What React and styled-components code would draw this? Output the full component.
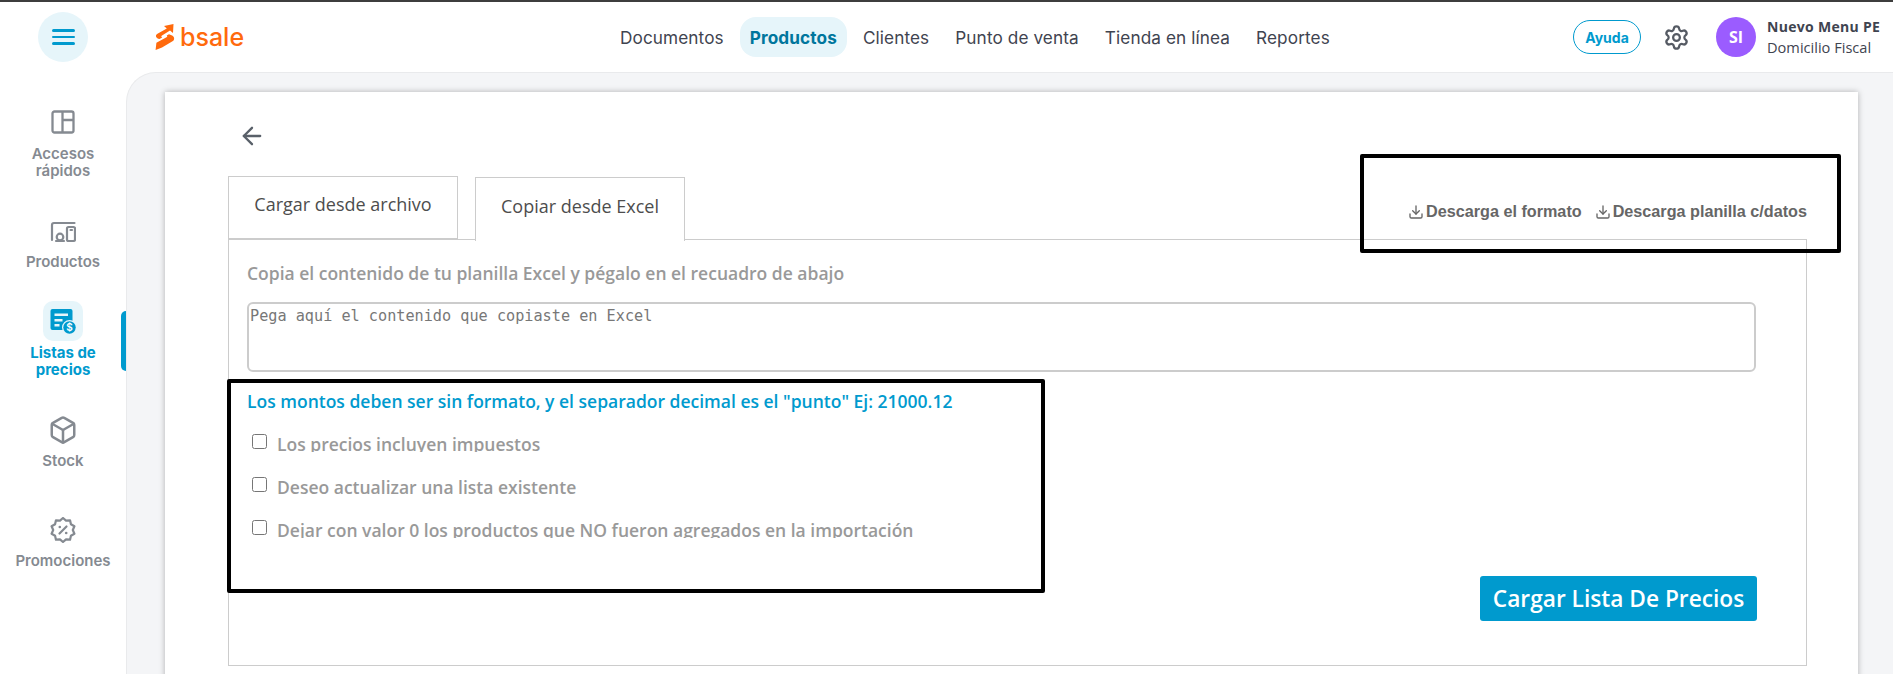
import React from 'react'
import styled, { createGlobalStyle } from 'styled-components'
import { Box, Settings, ArrowLeft, Download } from 'lucide-react'

const BLUE = '#009ace'
const GREY = '#858a91'

const Global = createGlobalStyle`
  html, body { margin: 0; padding: 0; background: #fff; }
  body { font-family: Inter, "Liberation Sans", sans-serif; }
`

const Page = styled.div`
  position: relative;
  width: 1893px;
  height: 674px;
  overflow: hidden;
  display: flex;
  flex-direction: column;
  background: #fff;
  border-top: 2px solid #3d3d3d;
  box-sizing: border-box;
`

const Header = styled.header`
  height: 70px;
  flex: none;
  position: relative;
  display: flex;
  align-items: center;
`

const MenuButton = styled.button`
  width: 50px;
  height: 50px;
  margin-left: 38px;
  border: 0;
  padding: 0;
  border-radius: 50%;
  background: #e6f5fa;
  display: flex;
  flex-direction: column;
  align-items: center;
  justify-content: center;
  gap: 4px;
  span {
    display: block;
    width: 23px;
    height: 2.4px;
    border-radius: 2px;
    background: ${BLUE};
  }
`

const Logo = styled.div`
  margin-left: 67px;
  display: flex;
  align-items: center;
  gap: 5px;
  color: #ff6a0d;
  font-size: 25px;
  font-weight: 500;
  line-height: 26px;
`

const Nav = styled.nav`
  position: absolute;
  left: 610px;
  top: 15px;
  display: flex;
  align-items: center;
  gap: 6px;
`

const NavLink = styled.a`
  height: 40px;
  padding: 0 10px;
  display: flex;
  align-items: center;
  border-radius: 16px;
  font-size: 17.2px;
  letter-spacing: 0.1px;
  color: ${p => (p.$active ? '#00769d' : '#3f4450')};
  font-weight: ${p => (p.$active ? 700 : 400)};
  background: ${p => (p.$active ? '#e6f5fa' : 'transparent')};
`

const HeaderRight = styled.div`
  margin-left: auto;
  display: flex;
  align-items: center;
`

const Help = styled.button`
  width: 68px;
  height: 34px;
  padding: 0;
  box-sizing: border-box;
  border: 1px solid ${BLUE};
  border-radius: 17px;
  background: #fff;
  color: ${BLUE};
  font-family: Inter, sans-serif;
  font-size: 14px;
  font-weight: 700;
`

const Gear = styled(Settings)`
  margin: 0 26px 0 22px;
  color: #555a63;
`

const Avatar = styled.div`
  width: 40px;
  height: 40px;
  border-radius: 50%;
  background: #9b5cff;
  color: #fff;
  display: flex;
  align-items: center;
  justify-content: center;
  font-family: "Open Sans", sans-serif;
  font-size: 16px;
  font-weight: 700;
`

const Account = styled.div`
  width: 126px;
  margin-left: 11px;
  font-family: "Open Sans", sans-serif;
  font-size: 14.6px;
  line-height: 20px;
  color: #3f4450;
  white-space: nowrap;
  b {
    display: block;
    font-size: 14px;
    letter-spacing: 0.3px;
  }
`

const Body = styled.div`
  flex: 1;
  min-height: 0;
  display: flex;
`

const Sidebar = styled.aside`
  width: 126px;
  flex: none;
  padding-top: 30px;
  display: flex;
  flex-direction: column;
  gap: 31px;
  box-sizing: border-box;
`

const SideItem = styled.div`
  position: relative;
  display: flex;
  flex-direction: column;
  align-items: center;
  gap: ${p => (p.$tall ? 3 : 2)}px;
  margin-top: ${p => p.$top || 0}px;
  margin-bottom: ${p => (p.$tall ? 1 : 0)}px;
  font-size: 15px;
  line-height: 17px;
  font-weight: ${p => (p.$active ? 700 : 600)};
  text-align: center;
  color: ${p => (p.$active ? BLUE : GREY)};
`

const SideIcon = styled.div`
  width: 40px;
  height: 40px;
  display: flex;
  align-items: center;
  justify-content: center;
  border-radius: 10px;
  background: ${p => (p.$active ? '#e6f5fa' : 'transparent')};
`

const Marker = styled.div`
  position: absolute;
  right: 0;
  top: 10px;
  width: 5px;
  height: 60px;
  border-radius: 5px 0 0 5px;
  background: ${BLUE};
`

const Main = styled.main`
  flex: 1;
  min-width: 0;
  padding: 19px 35px 0 38px;
  background: #f4f5f7;
  border-top: 1px solid #e9eaec;
  border-left: 1px solid #e9eaec;
  border-top-left-radius: 30px;
  box-sizing: border-box;
  display: flex;
`

const Card = styled.section`
  flex: 1;
  height: 620px;
  padding: 30px 51px 0 63px;
  background: #fff;
  box-shadow: 0 0 6px rgba(0, 0, 0, 0.28);
  box-sizing: border-box;
  font-family: "Open Sans", sans-serif;
`

const Back = styled(ArrowLeft)`
  display: block;
  margin: 0 0 26px 10px;
  color: #596069;
`

const TabRow = styled.div`
  height: 63px;
  display: flex;
  align-items: flex-start;
  gap: 17px;
`

const Tab = styled.div`
  position: relative;
  z-index: 1;
  box-sizing: border-box;
  width: ${p => p.$width}px;
  height: ${p => (p.$active ? 64 : 63)}px;
  margin-top: ${p => (p.$active ? 1 : 0)}px;
  display: flex;
  align-items: center;
  justify-content: center;
  padding-bottom: 8px;
  background: #fff;
  border: 1px solid #ccc;
  border-bottom: ${p => (p.$active ? '0' : '1px solid #ccc')};
  font-size: 18px;
  color: #4d4d4d;
`

const Downloads = styled.div`
  margin-left: auto;
  height: 71px;
  display: flex;
  align-items: center;
  gap: 13px;
`

const DownloadLink = styled.a`
  display: flex;
  align-items: center;
  gap: 2px;
  font-family: "Liberation Sans", sans-serif;
  font-size: 16.2px;
  font-weight: 700;
  color: #666;
  svg { width: 16px; height: 16px; }
`

const TabPanel = styled.div`
  height: 427px;
  padding: 22px 50px 0 18px;
  border: 1px solid #ccc;
  box-sizing: border-box;
  display: flex;
  flex-direction: column;
`

const Hint = styled.p`
  margin: 0 0 18px;
  font-size: 17.5px;
  line-height: 22px;
  font-weight: 600;
  color: #999;
`

const Paste = styled.textarea`
  display: block;
  width: 100%;
  height: 70px;
  flex: none;
  padding: 3px 1px 1px;
  margin-bottom: 18px;
  box-sizing: border-box;
  border: 2px solid #ccc;
  border-radius: 6px;
  outline: 0;
  resize: none;
  font-family: "DejaVu Sans Mono", monospace;
  font-size: 15.2px;
  line-height: 18px;
  &::placeholder { color: #777; opacity: 1; }
`

const Note = styled.p`
  margin: 0 0 19px;
  font-size: 17.5px;
  line-height: 23px;
  font-weight: 600;
  color: ${BLUE};
`

const Options = styled.div`
  display: flex;
  flex-direction: column;
  gap: 23px;
`

const Option = styled.label`
  display: flex;
  align-items: flex-start;
  height: 20px;
  overflow: hidden;
  font-size: 17.5px;
  line-height: 24px;
  font-weight: 600;
  color: #999;
  input {
    width: 15px;
    height: 15px;
    margin: 2px 10px 0 5px;
  }
`

const Submit = styled.button`
  align-self: flex-end;
  margin: 38px -1px 0 0;
  width: 277px;
  height: 45px;
  padding: 0;
  border: 0;
  border-radius: 3px;
  background: ${BLUE};
  color: #fff;
  font-family: "Open Sans", sans-serif;
  font-size: 22.7px;
  font-weight: 600;
`

const Callout = styled.div`
  position: absolute;
  z-index: 5;
  left: ${p => p.$x}px;
  top: ${p => p.$y}px;
  width: ${p => p.$w}px;
  height: ${p => p.$h}px;
  box-sizing: border-box;
  border: 4px solid #000;
  border-radius: 2px;
  pointer-events: none;
`

// logo mark, an S made of two bars with an arrow tip
const BoltMark = () => (
  <svg width="20" height="26" viewBox="0 0 20 26" fill="#ff6a0d">
    <path d="M9 2 18.500 0 18 9 15 6.500 7 11.500C6 12.200 6.200 13 7.200 13.400L4.500 15C1 14.500 0 11.500 2 10L11.800 4.500Z" />
    <path d="M16.500 11.200C19.700 12.500 20 15.800 17.500 17.200L7 23.500 .6 26 1.400 18.800 11.500 13.200C12.500 12.600 12.400 12 11.600 11.600L14 10.200Z" />
  </svg>
)

const QuickAccessIcon = () => (
  <svg width="24" height="24" viewBox="0 0 24 24" fill="none" stroke={GREY} strokeWidth="2.300" strokeLinejoin="round">
    <rect x="1.500" y="1.500" width="21" height="21" rx="2" />
    <path d="M11.500 1.500v21M11.500 10h11" />
  </svg>
)

const ProductsIcon = () => (
  <svg width="26" height="24" viewBox="0 0 26 24" fill="none" stroke={GREY} strokeWidth="2.200" strokeLinejoin="round" strokeLinecap="round">
    <path d="M2 21V6C2 5 2.800 4 4 4H24.500" />
    <rect x="17" y="8" width="8" height="14" rx="1.500" />
    <circle cx="10" cy="18" r="3.300" />
    <path d="M6 22H14" />
    <path d="M20.500 11h1.500" />
  </svg>
)

const PriceListIcon = () => (
  <svg width="26" height="26" viewBox="0 0 26 26">
    <rect x="0.500" y="1" width="22" height="21" rx="2" fill={BLUE} />
    <path fill="#e6f5fa" d="M4.500 5.500h13.500v2.500H4.500zM4.500 11h8v2.500h-8zM4.500 16h5v2.500h-5z" />
    <circle cx="19.500" cy="19.500" r="7.500" fill="#e6f5fa" />
    <circle cx="19.500" cy="19.500" r="6.200" fill={BLUE} />
    <text x="19.500" y="23" fontSize="10" fontWeight="600" fontFamily="Inter, sans-serif" textAnchor="middle" fill="#fff">$</text>
  </svg>
)

// scalloped badge outline, points computed around the centre
const sealPoints = Array.from({ length: 20 }, (_, i) => {
  const r = i % 2 === 0 ? 12 : 9.8
  const a = (i * Math.PI) / 10 - Math.PI / 2
  return `${(13 + r * Math.cos(a)).toFixed(2)},${(13 + r * Math.sin(a)).toFixed(2)}`
}).join(' ')

const PromoIcon = () => (
  <svg width="26" height="26" viewBox="0 0 26 26" fill="none" stroke={GREY} strokeWidth="2.200" strokeLinejoin="round" strokeLinecap="round">
    <polygon points={sealPoints} />
    <path d="M9.500 16.500 16.500 9.500" />
    <circle cx="9.800" cy="10" r="1.300" fill={GREY} stroke="none" />
    <circle cx="16.200" cy="16" r="1.300" fill={GREY} stroke="none" />
  </svg>
)

const options = [
  'Los precios incluyen impuestos',
  'Deseo actualizar una lista existente',
  'Dejar con valor 0 los productos que NO fueron agregados en la importación',
]

export default function App() {
  return (
    <Page>
      <Global />
      <Header>
        <MenuButton aria-label="Menu"><span /><span /><span /></MenuButton>
        <Logo><BoltMark />bsale</Logo>
        <Nav>
          <NavLink>Documentos</NavLink>
          <NavLink $active>Productos</NavLink>
          <NavLink>Clientes</NavLink>
          <NavLink>Punto de venta</NavLink>
          <NavLink>Tienda en línea</NavLink>
          <NavLink>Reportes</NavLink>
        </Nav>
        <HeaderRight>
          <Help>Ayuda</Help>
          <Gear size={27} strokeWidth={2} />
          <Avatar>SI</Avatar>
          <Account>
            <b>Nuevo Menu PE</b>
            Domicilio Fiscal
          </Account>
        </HeaderRight>
      </Header>
      <Body>
        <Sidebar>
          <SideItem $tall>
            <SideIcon><QuickAccessIcon /></SideIcon>
            <span>Accesos<br />rápidos</span>
          </SideItem>
          <SideItem>
            <SideIcon><ProductsIcon /></SideIcon>
            <span>Productos</span>
          </SideItem>
          <SideItem $active $tall>
            <SideIcon $active><PriceListIcon /></SideIcon>
            <span>Listas de<br />precios</span>
            <Marker />
          </SideItem>
          <SideItem>
            <SideIcon><Box size={30} color={GREY} strokeWidth={2} /></SideIcon>
            <span>Stock</span>
          </SideItem>
          <SideItem $top={10}>
            <SideIcon><PromoIcon /></SideIcon>
            <span>Promociones</span>
          </SideItem>
        </Sidebar>
        <Main>
          <Card>
            <Back size={28} strokeWidth={2} />
            <TabRow>
              <Tab $width={230}>Cargar desde archivo</Tab>
              <Tab $width={210} $active>Copiar desde Excel</Tab>
              <Downloads>
                <DownloadLink><Download />Descarga el formato</DownloadLink>
                <DownloadLink><Download />Descarga planilla c/datos</DownloadLink>
              </Downloads>
            </TabRow>
            <TabPanel>
              <Hint>Copia el contenido de tu planilla Excel y pégalo en el recuadro de abajo</Hint>
              <Paste placeholder="Pega aquí el contenido que copiaste en Excel" />
              <Note>Los montos deben ser sin formato, y el separador decimal es el "punto" Ej: 21000.12</Note>
              <Options>
                {options.map(text => (
                  <Option key={text}>
                    <input type="checkbox" />
                    {text}
                  </Option>
                ))}
              </Options>
              <Submit>Cargar Lista De Precios</Submit>
            </TabPanel>
          </Card>
        </Main>
      </Body>
      <Callout $x={1360} $y={152} $w={481} $h={99} />
      <Callout $x={227} $y={377} $w={818} $h={214} />
    </Page>
  )
}
